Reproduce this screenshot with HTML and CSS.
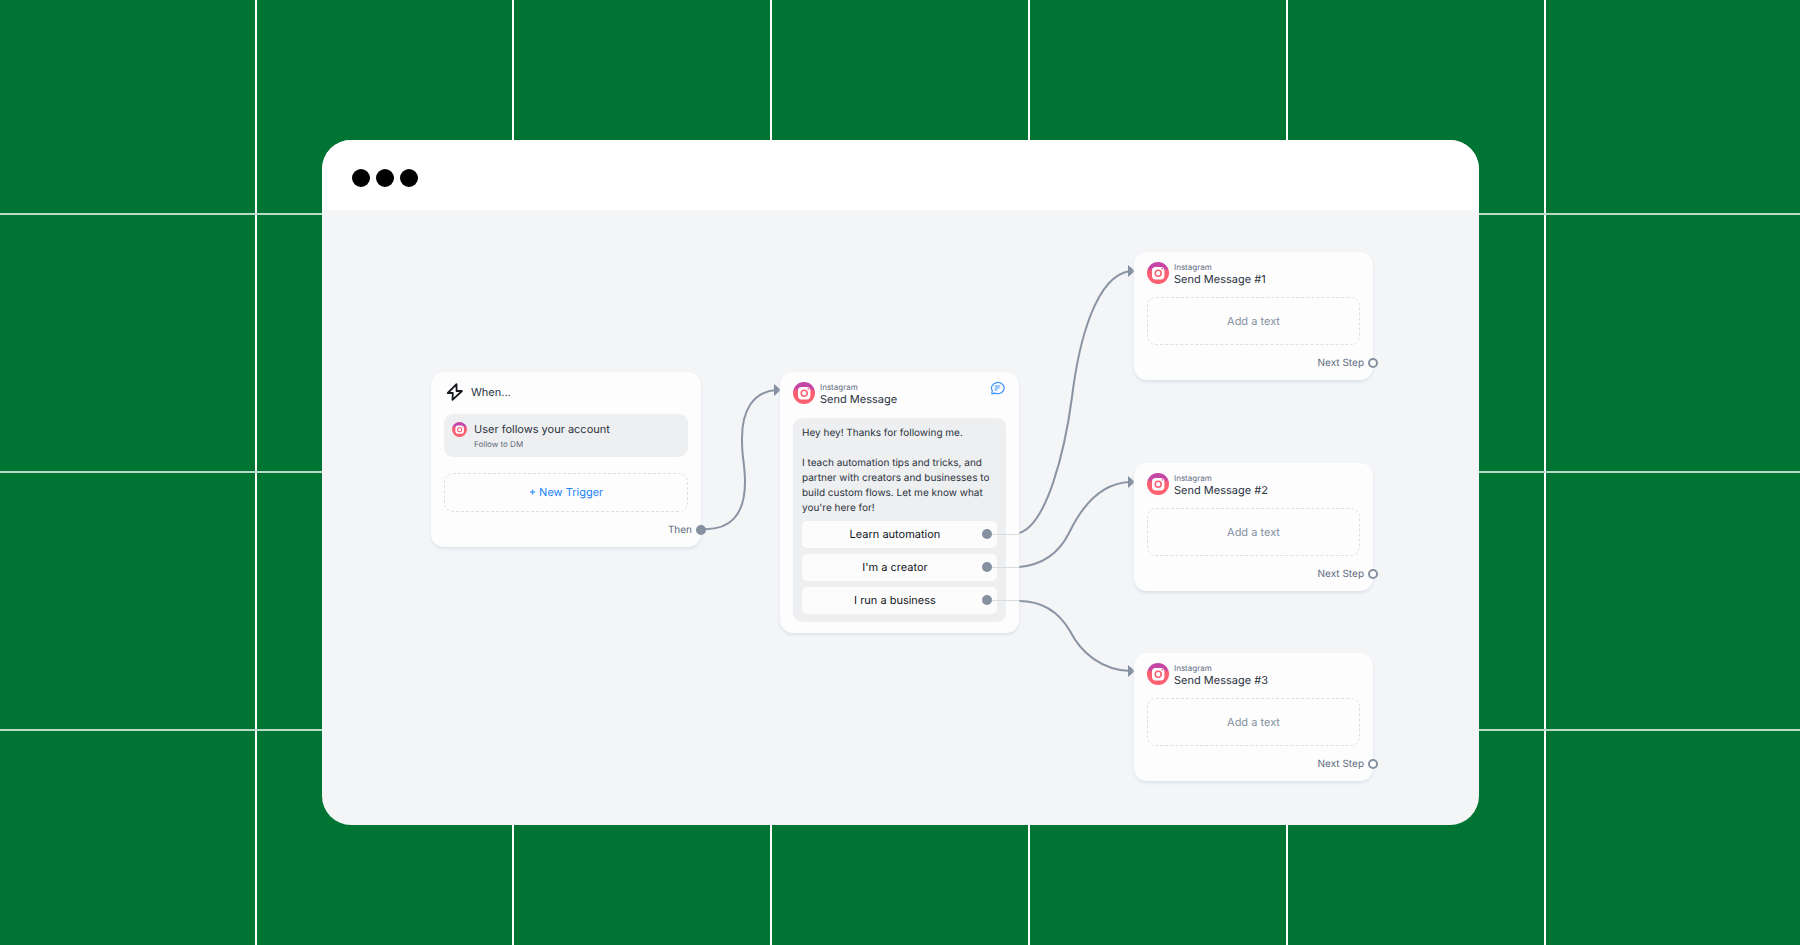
FILE: index.html
```html
<!DOCTYPE html>
<html lang="en">
<head>
<meta charset="utf-8">
<title>Automation flow</title>
<link rel="stylesheet" href="styles.css">
</head>
<body>
<svg class="grid-lines" aria-hidden="true">
  <path d="M256 0V2000M513 0V2000M771 0V2000M1029 0V2000M1287 0V2000M1545 0V2000"/>
  <path class="row-line" d="M0 214H4000M0 472H4000M0 730H4000"/>
</svg>
<svg class="defs" aria-hidden="true">
  <defs>
    <linearGradient id="ig" x1="0" y1="0" x2="0" y2="1">
      <stop offset="0.28" stop-color="#c646a6"/>
      <stop offset="0.42" stop-color="#fb5f70"/>
    </linearGradient>
    <symbol id="instagram" viewBox="0 0 22 22">
      <circle cx="11" cy="11" r="11" fill="url(#ig)"/>
      <rect x="5" y="5" width="12.4" height="12.4" rx="3.6" fill="#fff"/>
      <circle cx="11.2" cy="11.2" r="3" fill="none" stroke="#fb5f70" stroke-width="1.5"/>
      <circle cx="15.3" cy="6.9" r="0.8" fill="#fb5f70"/>
    </symbol>
  </defs>
</svg>

<main class="window">
  <header class="titlebar"><span class="dot"></span><span class="dot"></span><span class="dot"></span></header>
  <div class="canvas">
    <svg class="edges" aria-hidden="true">
      <path d="M379 319C408 321 423 305 423 272C423 262 422 256 421 247C420 240 420 234 420 228C420 202 430 182 454 180"/>
      <path d="M697 323C725 315 743 240 750 187C757 130 774 66 808 61"/>
      <path d="M697 357C720 355 737 343 747 323C759 298 778 273 808 272"/>
      <path d="M697 391C722 391 738 404 748 421C759 443 780 460 808 461"/>
      <path class="arrow" d="M452 174L459 180L452 186ZM806 55L813 61L806 67ZM806 266L813 272L806 278ZM806 455L813 461L806 467Z"/>
    </svg>

    <section class="node node-trigger">
      <div class="head">
        <svg class="bolt" viewBox="0 0 18 20"><path d="M10.5 2.2L1.8 11H6.8L6.5 17.8L16 9H10.6Z"/></svg>
        <h2 class="when">When...</h2>
      </div>
      <div class="event">
        <svg class="ig-small"><use href="#instagram"/></svg>
        <div>
          <p class="event-name">User follows your account</p>
          <p class="event-kind">Follow to DM</p>
        </div>
      </div>
      <button class="new-trigger">+ New Trigger</button>
      <div class="out">Then<span class="port port-full"></span></div>
    </section>

    <section class="node node-message">
      <div class="head">
        <svg class="ig"><use href="#instagram"/></svg>
        <div><p class="channel">Instagram</p><h2 class="title">Send Message</h2></div>
        <svg class="bubble" viewBox="0 0 15 14"><path d="M1.800 12.600L2.300 9.800A6.300 5.600 0 1 1 5 12.100Q3.600 12.700 1.800 12.600ZM4.600 5H10.400M4.600 7H9.400M4.600 9H7.400"/></svg>
      </div>
      <div class="message">
        <p>Hey hey! Thanks for following me.</p>
        <p class="para">I teach automation tips and tricks, and<br>partner with creators and businesses to<br>build custom flows. Let me know what<br>you're here for!</p>
        <div class="replies">
          <button class="reply">Learn automation<span class="reply-port"></span></button>
          <button class="reply">I'm a creator<span class="reply-port"></span></button>
          <button class="reply">I run a business<span class="reply-port"></span></button>
        </div>
      </div>
    </section>

    <section class="node node-step step-1">
      <div class="head">
        <svg class="ig"><use href="#instagram"/></svg>
        <div><p class="channel">Instagram</p><h2 class="title">Send Message #1</h2></div>
      </div>
      <button class="add-text">Add a text</button>
      <div class="out">Next Step<span class="port"></span></div>
    </section>

    <section class="node node-step step-2">
      <div class="head">
        <svg class="ig"><use href="#instagram"/></svg>
        <div><p class="channel">Instagram</p><h2 class="title">Send Message #2</h2></div>
      </div>
      <button class="add-text">Add a text</button>
      <div class="out">Next Step<span class="port"></span></div>
    </section>

    <section class="node node-step step-3">
      <div class="head">
        <svg class="ig"><use href="#instagram"/></svg>
        <div><p class="channel">Instagram</p><h2 class="title">Send Message #3</h2></div>
      </div>
      <button class="add-text">Add a text</button>
      <div class="out">Next Step<span class="port"></span></div>
    </section>
  </div>
</main>
</body>
</html>
```
FILE: styles.css
```css
* { box-sizing: border-box; }
body {
  margin: 0;
  min-height: 100vh;
  padding: 140px 321px 120px 322px;
  display: flex;
  position: relative;
  background: #007432;
  font-family: Inter, "Liberation Sans", sans-serif;
  font-size: 11px;
  line-height: 15px;
  color: #2b3240;
  text-rendering: geometricPrecision;
}
h2, p { margin: 0; font-size: inherit; font-weight: 400; }
button { font: inherit; color: inherit; border: 0; padding: 0; background: none; text-rendering: inherit; }
.defs { position: absolute; width: 0; height: 0; }
.grid-lines {
  position: absolute;
  inset: 0;
  width: 100%;
  height: 100%;
  stroke: #fff;
  stroke-width: 2;
}
.row-line { stroke: #b9dac6; }

.window {
  position: relative;
  flex: 1;
  display: flex;
  flex-direction: column;
  border-radius: 29px;
  overflow: hidden;
  background: #f3f5f7;
}
.titlebar {
  display: flex;
  align-items: center;
  gap: 6px;
  padding: 29px 30px 23px;
  background: #fff;
}
.dot { width: 18px; height: 18px; border-radius: 50%; background: #000; }
.canvas { position: relative; flex: 1; min-height: 610px; }
.edges {
  position: absolute;
  inset: 0;
  width: 100%;
  height: 100%;
  fill: none;
  stroke: #8a94a3;
  stroke-width: 2;
}
.arrow { fill: #8590a0; stroke: none; }

.node {
  position: absolute;
  border-radius: 13px;
  background: #fdfdfe;
  box-shadow: 0 2px 3px #dde3ea;
  padding: 10px 13px;
}
.node-trigger { left: 109px; top: 162px; width: 270px; height: 175px; }
.node-message { left: 458px; top: 162px; width: 239px; height: 261px; }
.node-step { left: 812px; width: 239px; height: 128px; }
.step-1 { top: 42px; }
.step-2 { top: 253px; }
.step-3 { top: 443px; }

.head { display: flex; gap: 5px; }
.ig { width: 22px; height: 22px; flex: none; }
.channel { font-size: 8px; line-height: 10px; color: #5f6b7d; }
.title { line-height: 14px; }
.bubble {
  width: 15px;
  height: 14px;
  margin-left: auto;
  margin-right: 1px;
  margin-top: -1px;
  fill: none;
  stroke: #3d93f8;
  stroke-width: 1.2;
}
.bolt {
  width: 18px;
  height: 20px;
  fill: none;
  stroke: #15181d;
  stroke-width: 1.8;
  stroke-linejoin: round;
}
.when { line-height: 21px; }
.node-trigger .head { padding-left: 2px; gap: 7px; }

.event {
  display: flex;
  gap: 7px;
  height: 43px;
  margin-top: 11px;
  padding: 8px;
  border-radius: 9px;
  background: #eeeff1;
}
.ig-small { width: 15px; height: 15px; flex: none; }
.event-kind { font-size: 8px; line-height: 14px; color: #5f6b7d; }
.new-trigger, .add-text {
  display: block;
  width: 100%;
  border: 1px dashed #dcdfe6;
  border-radius: 9px;
}
.new-trigger { height: 39px; margin-top: 16px; color: #1b84fa; }
.add-text { height: 48px; margin-top: 11px; color: #8490a0; }
.out {
  display: flex;
  justify-content: flex-end;
  align-items: center;
  gap: 4px;
  margin-right: -18px;
  margin-top: 10px;
  font-size: 10px;
  line-height: 16px;
  color: #5f6b7d;
}
.port {
  width: 10px;
  height: 10px;
  border: 2px solid #8590a0;
  border-radius: 50%;
  background: #fff;
}
.port-full { background: #8590a0; }

.message {
  margin-top: 12px;
  padding: 8px 9px;
  border-radius: 9px;
  background: #eeeff1;
  font-size: 10px;
}
.para { margin-top: 15px; }
.replies { display: grid; gap: 6px; margin-top: 5px; }
.reply {
  position: relative;
  height: 27px;
  padding-right: 9px;
  border-radius: 5px;
  background: #fcfcfd;
  color: #11151c;
  font-size: 11px;
}
.reply-port {
  position: absolute;
  right: 5px;
  top: 8px;
  width: 10px;
  height: 10px;
  border-radius: 50%;
  background: #8590a0;
}
.reply-port::after {
  content: "";
  position: absolute;
  left: 10px;
  top: 5px;
  width: 27px;
  height: 1px;
  background: #d9dce1;
}
```
